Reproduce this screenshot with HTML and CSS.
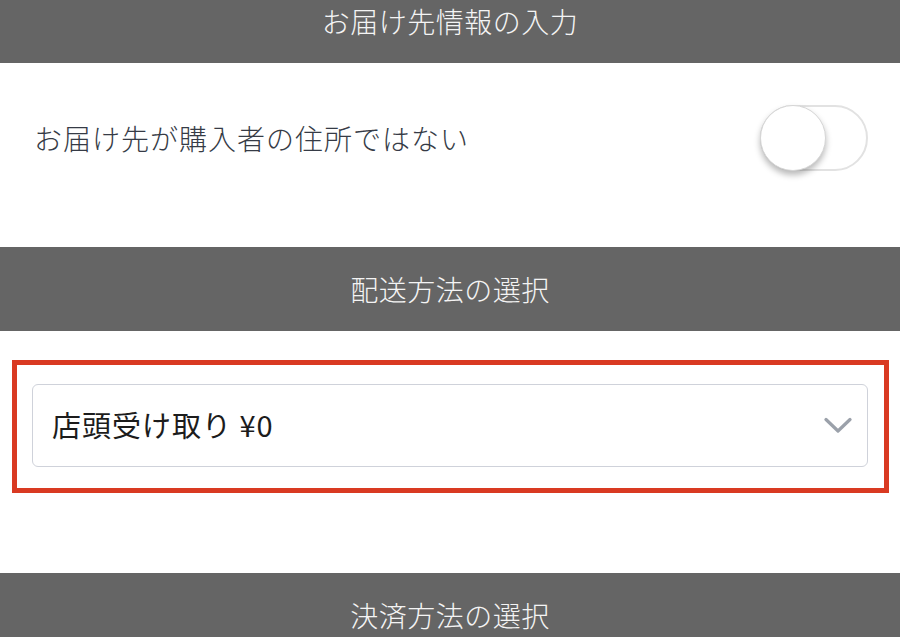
FILE: index.html
```html
<!DOCTYPE html>
<html lang="ja">
<head>
<meta charset="utf-8">
<title>お届け先情報の入力</title>
<link rel="stylesheet" href="styles.css">
</head>
<body>
<div class="page">
  <div class="bar bar-first">お届け先情報の入力</div>
  <section class="section section-address">
    <div class="toggle-row">
      <span class="toggle-label">お届け先が購入者の住所ではない</span>
      <span class="toggle"><span class="knob"></span></span>
    </div>
  </section>
  <div class="bar">配送方法の選択</div>
  <section class="section section-shipping">
    <div class="highlight">
      <div class="select">
        <span class="select-text">店頭受け取り ¥0</span>
        <svg class="chevron" width="28" height="18" viewBox="0 0 28 18" aria-hidden="true">
          <path d="M2 2.5 L14 14 L26 2.5" fill="none" stroke="#9ba1aa" stroke-width="3.2" stroke-linecap="round" stroke-linejoin="round"/>
        </svg>
      </div>
    </div>
  </section>
  <div class="bar">決済方法の選択</div>
</div>
</body>
</html>
```

FILE: styles.css
```css
html, body {
  margin: 0;
  padding: 0;
  background: #ffffff;
}

body {
  font-family: "Noto Sans CJK JP", "Noto Sans", "Liberation Sans", sans-serif;
  overflow: hidden;
}

.page {
  width: 900px;
}

.bar {
  height: 84px;
  background: #656565;
  color: #f4f4f4;
  font-size: 28px;
  font-weight: 300;
  letter-spacing: 0.5px;
  display: flex;
  align-items: center;
  justify-content: center;
}

.bar-first {
  margin-top: -21px;
}

.section-address {
  height: 184px;
  box-sizing: border-box;
  padding: 42px 32px 0 34px;
}

.toggle-row {
  display: flex;
  align-items: center;
  justify-content: space-between;
  height: 66px;
}

.toggle-label {
  font-size: 28px;
  font-weight: 300;
  color: #363b46;
  letter-spacing: 1px;
}

.toggle {
  width: 108px;
  height: 66px;
  box-sizing: border-box;
  border: 2px solid #e2e2e2;
  border-radius: 33px;
  background: #ffffff;
  display: flex;
  align-items: center;
}

.knob {
  width: 66px;
  height: 66px;
  margin-left: -2px;
  box-sizing: border-box;
  border-radius: 50%;
  background: #ffffff;
  border: 1px solid #d6d6d6;
  box-shadow: 0 4px 6px rgba(0, 0, 0, 0.28);
}

.section-shipping {
  height: 242px;
  box-sizing: border-box;
  padding: 29px 11px 0 12px;
}

.highlight {
  border: 5px solid #d93a22;
  padding: 19px 16px 21px 15px;
}

.select {
  height: 83px;
  box-sizing: border-box;
  border: 1.5px solid #cfd2da;
  border-radius: 6px;
  display: flex;
  align-items: center;
  justify-content: space-between;
  padding: 0 15px 0 19px;
}

.select-text {
  font-size: 29px;
  letter-spacing: 1px;
  color: #1c1c1c;
  margin-top: -4px;
}

.chevron {
  display: block;
}
```
